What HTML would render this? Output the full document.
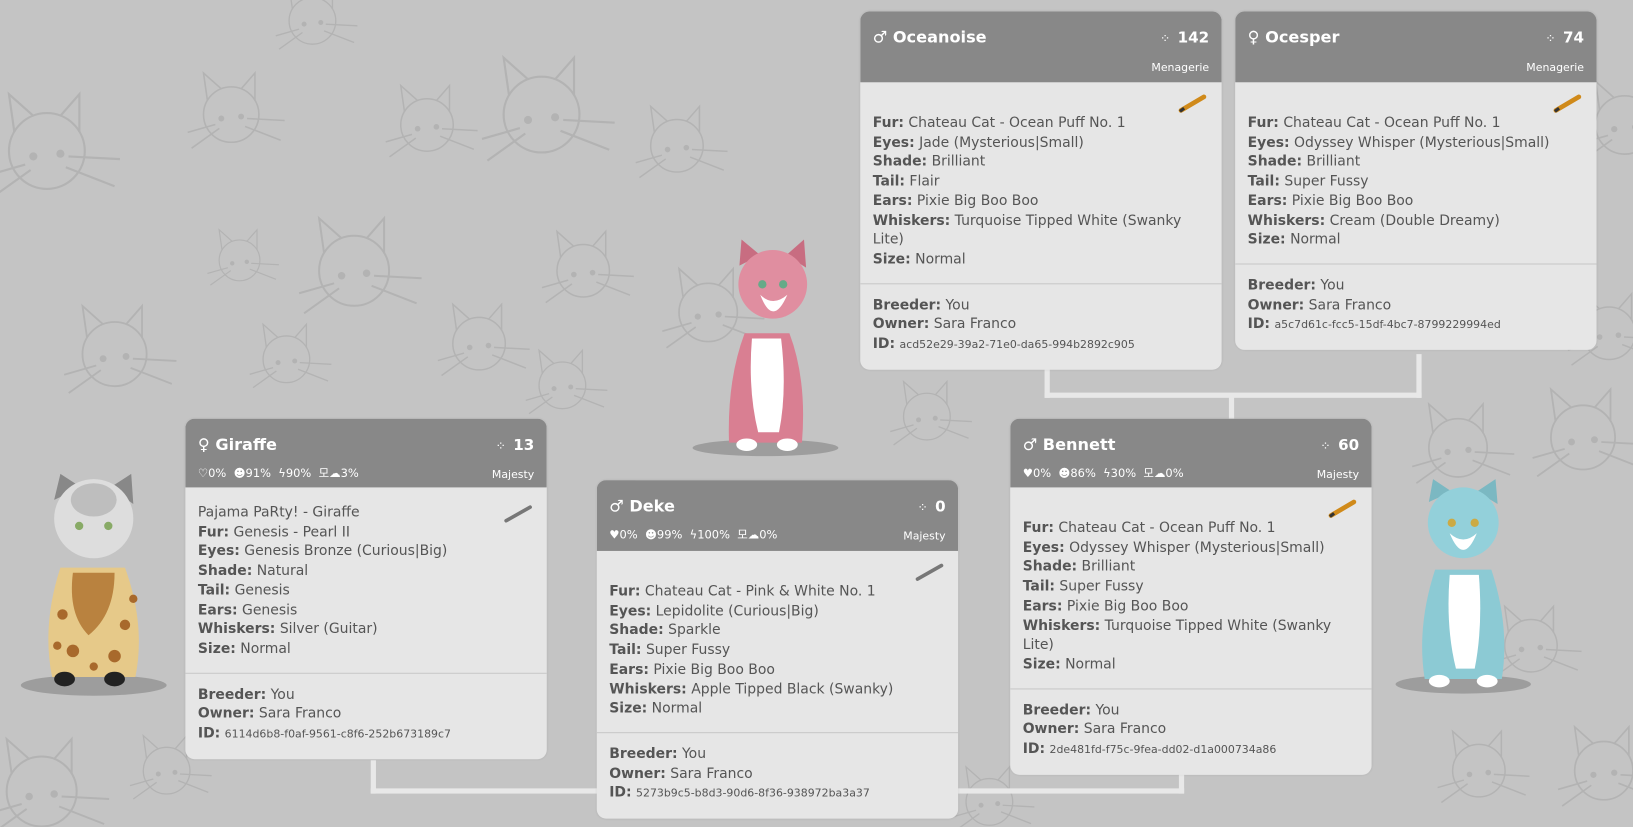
<!DOCTYPE html>
<html><head><meta charset="utf-8">
<style>
html,body{margin:0;padding:0;}
body{width:1633px;height:827px;overflow:hidden;background:#c4c4c4;font-family:"DejaVu Sans","Liberation Sans",sans-serif;}
#w{position:absolute;left:0;top:0;width:1568px;height:794px;transform:scale(1.04145);transform-origin:0 0;}
.bg{position:absolute;left:0;top:0;}
.ln{position:absolute;background:#e8e8e8;}
.card{position:absolute;width:347px;border-radius:9px;background:#e6e6e6;overflow:hidden;color:#555;font-size:13.4px;line-height:18.7px;box-shadow:0 0 2px rgba(0,0,0,.08);}
.hd{background:#888;color:#fff;position:relative;height:68px;}
.hd.s{height:66px;}
.nm{position:absolute;left:12px;top:16px;font-weight:bold;font-size:15.5px;}
.cnt{position:absolute;right:12px;top:17px;font-weight:bold;font-size:14.5px;}
.cnt i{font-style:normal;font-weight:normal;font-size:12px;margin-right:8px;letter-spacing:-1px;}
.sub{position:absolute;right:12px;top:45px;font-size:10.5px;}
.st{position:absolute;left:12px;top:44px;font-size:11px;}
.sec{padding:0 12px;}
.s1{padding-top:10px;padding-bottom:12px;border-bottom:1px solid #c8c8c8;}
.s2{padding-top:12px;padding-bottom:14px;}
.pen{height:21px;position:relative;}
.pen svg,.pf svg{position:absolute;right:0;top:0;}
.pf{float:right;width:30px;height:18px;position:relative;}
b{color:#555;}
.id{font-size:10.5px;}
.cat{position:absolute;}
</style></head><body>
<div id="w">
<svg class="bg" width="1568" height="794">
<defs><g id="cf" fill="none" stroke="#b3b3b3" stroke-width="1.6"><circle cx="0" cy="0" r="28"/><path d="M-24-14 L-28-42 L-10-26 M10-26 L24-42 L24-14"/><path d="M16 4 L54 6 M14 12 L50 26 M-16 10 L-44 18 M-12 14 L-40 34"/><circle cx="-10" cy="4" r="3" fill="#b3b3b3" stroke="none"/><circle cx="10" cy="2" r="3" fill="#b3b3b3" stroke="none"/></g></defs>
<use href="#cf" transform="translate(45,145) scale(1.3)"/><use href="#cf" transform="translate(222,110) scale(0.95)"/><use href="#cf" transform="translate(230,250) scale(0.7)"/><use href="#cf" transform="translate(340,260) scale(1.2)"/><use href="#cf" transform="translate(110,340) scale(1.1)"/><use href="#cf" transform="translate(275,345) scale(0.8)"/><use href="#cf" transform="translate(410,120) scale(0.9)"/><use href="#cf" transform="translate(520,110) scale(1.3)"/><use href="#cf" transform="translate(560,260) scale(0.9)"/><use href="#cf" transform="translate(460,330) scale(0.9)"/><use href="#cf" transform="translate(650,140) scale(0.9)"/><use href="#cf" transform="translate(680,300) scale(1)"/><use href="#cf" transform="translate(40,760) scale(1.2)"/><use href="#cf" transform="translate(160,740) scale(0.8)"/><use href="#cf" transform="translate(540,370) scale(0.8)"/><use href="#cf" transform="translate(890,400) scale(0.8)"/><use href="#cf" transform="translate(1400,430) scale(1)"/><use href="#cf" transform="translate(1520,420) scale(1.1)"/><use href="#cf" transform="translate(1470,620) scale(0.9)"/><use href="#cf" transform="translate(1540,740) scale(1)"/><use href="#cf" transform="translate(1420,740) scale(0.9)"/><use href="#cf" transform="translate(1560,120) scale(1)"/><use href="#cf" transform="translate(1545,320) scale(0.9)"/><use href="#cf" transform="translate(950,770) scale(0.8)"/><use href="#cf" transform="translate(470,520) scale(1)"/><use href="#cf" transform="translate(300,20) scale(0.8)"/>
</svg>

<div class="ln" style="left:1003px;top:353px;width:5px;height:29px"></div>
<div class="ln" style="left:1003px;top:377px;width:362px;height:5px"></div>
<div class="ln" style="left:1360px;top:340px;width:5px;height:42px"></div>
<div class="ln" style="left:1180px;top:380px;width:5px;height:22px"></div>
<div class="ln" style="left:356px;top:730px;width:5px;height:32px"></div>
<div class="ln" style="left:356px;top:757px;width:781px;height:5px"></div>
<div class="ln" style="left:1132px;top:743px;width:5px;height:19px"></div>

<!-- cats -->
<svg class="cat" style="left:660px;top:225px" width="160" height="220">
<ellipse cx="75" cy="205" rx="70" ry="8" fill="#555" opacity=".35"/>
<path d="M55 95 Q38 140 40 200 L110 200 Q115 140 98 95 Z" fill="#d97f92"/>
<path d="M62 100 Q58 150 68 190 L88 190 Q96 150 90 100 Z" fill="#fff"/>
<ellipse cx="57" cy="202" rx="10" ry="6" fill="#fff"/><ellipse cx="96" cy="202" rx="10" ry="6" fill="#fff"/>
<path d="M50 30 L52 5 L70 20 Z M95 20 L112 5 L114 32 Z" fill="#c86d81"/>
<ellipse cx="82" cy="48" rx="33" ry="33" fill="#e08ea0"/>
<path d="M70 58 Q82 90 96 58 Q82 70 70 58Z" fill="#fff"/>
<circle cx="72" cy="48" r="4" fill="#6a8"/><circle cx="92" cy="48" r="4" fill="#6a8"/>
</svg>
<svg class="cat" style="left:10px;top:450px" width="160" height="225">
<ellipse cx="80" cy="208" rx="70" ry="10" fill="#555" opacity=".35"/>
<path d="M48 95 Q30 150 40 200 L120 200 Q130 150 110 95 Z" fill="#e6c989"/>
<path d="M60 100 Q55 140 75 160 Q100 140 100 100Z" fill="#b9823f"/>
<g fill="#a8692c"><circle cx="50" cy="140" r="5"/><circle cx="60" cy="175" r="6"/><circle cx="110" cy="150" r="5"/><circle cx="100" cy="180" r="6"/><circle cx="80" cy="190" r="4"/><circle cx="45" cy="170" r="4"/><circle cx="118" cy="125" r="4"/></g>
<ellipse cx="52" cy="202" rx="10" ry="7" fill="#222"/><ellipse cx="100" cy="202" rx="10" ry="7" fill="#222"/>
<path d="M42 30 L48 5 L68 18 Z M96 18 L116 5 L118 34 Z" fill="#888"/>
<ellipse cx="80" cy="48" rx="38" ry="38" fill="#ddd"/>
<ellipse cx="80" cy="30" rx="22" ry="16" fill="#aaa" opacity=".6"/>
<circle cx="66" cy="55" r="4" fill="#8a6"/><circle cx="94" cy="55" r="4" fill="#8a6"/>
</svg>
<svg class="cat" style="left:1330px;top:452px" width="150" height="220">
<ellipse cx="75" cy="205" rx="65" ry="9" fill="#555" opacity=".35"/>
<path d="M48 95 Q30 150 38 200 L112 200 Q120 150 102 95 Z" fill="#8ccad4"/>
<path d="M62 100 Q58 150 68 190 L86 190 Q94 150 90 100 Z" fill="#fff"/>
<ellipse cx="52" cy="202" rx="10" ry="6" fill="#fff"/><ellipse cx="98" cy="202" rx="10" ry="6" fill="#fff"/>
<path d="M42 30 L46 8 L64 20 Z M88 20 L106 8 L108 32 Z" fill="#7bb8c2"/>
<ellipse cx="75" cy="50" rx="34" ry="34" fill="#93d0da"/>
<path d="M62 60 Q75 92 88 60 Q75 72 62 60Z" fill="#fff"/>
<circle cx="64" cy="50" r="4" fill="#ca4"/><circle cx="86" cy="50" r="4" fill="#ca4"/>
</svg>

<!-- Oceanoise -->
<div class="card" style="left:826px;top:11px">
<div class="hd"><div class="nm">♂ Oceanoise</div><div class="cnt"><i>⁘</i>142</div><div class="sub">Menagerie</div></div>
<div class="sec s1"><div class="pen"><svg width="30" height="20"><path d="M3 17 L25 4" stroke="#d08a1a" stroke-width="4.5" stroke-linecap="round"/><path d="M2 18 L6 15" stroke="#333" stroke-width="3"/></svg></div>
<b>Fur:</b> Chateau Cat - Ocean Puff No. 1<br><b>Eyes:</b> Jade (Mysterious|Small)<br><b>Shade:</b> Brilliant<br><b>Tail:</b> Flair<br><b>Ears:</b> Pixie Big Boo Boo<br><b>Whiskers:</b> Turquoise Tipped White (Swanky Lite)<br><b>Size:</b> Normal</div>
<div class="sec s2"><b>Breeder:</b> You<br><b>Owner:</b> Sara Franco<br><b>ID:</b> <span class="id">acd52e29-39a2-71e0-da65-994b2892c905</span></div>
</div>

<!-- Ocesper -->
<div class="card" style="left:1186px;top:11px">
<div class="hd"><div class="nm">♀ Ocesper</div><div class="cnt"><i>⁘</i>74</div><div class="sub">Menagerie</div></div>
<div class="sec s1"><div class="pen"><svg width="30" height="20"><path d="M3 17 L25 4" stroke="#d08a1a" stroke-width="4.5" stroke-linecap="round"/><path d="M2 18 L6 15" stroke="#333" stroke-width="3"/></svg></div>
<b>Fur:</b> Chateau Cat - Ocean Puff No. 1<br><b>Eyes:</b> Odyssey Whisper (Mysterious|Small)<br><b>Shade:</b> Brilliant<br><b>Tail:</b> Super Fussy<br><b>Ears:</b> Pixie Big Boo Boo<br><b>Whiskers:</b> Cream (Double Dreamy)<br><b>Size:</b> Normal</div>
<div class="sec s2"><b>Breeder:</b> You<br><b>Owner:</b> Sara Franco<br><b>ID:</b> <span class="id">a5c7d61c-fcc5-15df-4bc7-8799229994ed</span></div>
</div>

<!-- Giraffe -->
<div class="card" style="left:178px;top:402px">
<div class="hd s"><div class="nm">♀ Giraffe</div><div class="cnt"><i>⁘</i>13</div><div class="st">♡0% &nbsp;☻91% &nbsp;ϟ90% &nbsp;모☁3%</div><div class="sub">Majesty</div></div>
<div class="sec s1" style="padding-top:16px"><div class="pf"><svg width="30" height="18"><path d="M3 16 L26 3" stroke="#777" stroke-width="3.5" stroke-linecap="round"/></svg></div>
Pajama PaRty! - Giraffe<br><b>Fur:</b> Genesis - Pearl II<br><b>Eyes:</b> Genesis Bronze (Curious|Big)<br><b>Shade:</b> Natural<br><b>Tail:</b> Genesis<br><b>Ears:</b> Genesis<br><b>Whiskers:</b> Silver (Guitar)<br><b>Size:</b> Normal</div>
<div class="sec s2"><b>Breeder:</b> You<br><b>Owner:</b> Sara Franco<br><b>ID:</b> <span class="id">6114d6b8-f0af-9561-c8f6-252b673189c7</span></div>
</div>

<!-- Deke -->
<div class="card" style="left:573px;top:461px">
<div class="hd"><div class="nm">♂ Deke</div><div class="cnt"><i>⁘</i>0</div><div class="st">♥0% &nbsp;☻99% &nbsp;ϟ100% &nbsp;모☁0%</div><div class="sub">Majesty</div></div>
<div class="sec s1"><div class="pen"><svg width="30" height="20"><path d="M3 17 L26 4" stroke="#777" stroke-width="3.5" stroke-linecap="round"/></svg></div>
<b>Fur:</b> Chateau Cat - Pink &amp; White No. 1<br><b>Eyes:</b> Lepidolite (Curious|Big)<br><b>Shade:</b> Sparkle<br><b>Tail:</b> Super Fussy<br><b>Ears:</b> Pixie Big Boo Boo<br><b>Whiskers:</b> Apple Tipped Black (Swanky)<br><b>Size:</b> Normal</div>
<div class="sec s2"><b>Breeder:</b> You<br><b>Owner:</b> Sara Franco<br><b>ID:</b> <span class="id">5273b9c5-b8d3-90d6-8f36-938972ba3a37</span></div>
</div>

<!-- Bennett -->
<div class="card" style="left:970px;top:402px">
<div class="hd s"><div class="nm">♂ Bennett</div><div class="cnt"><i>⁘</i>60</div><div class="st">♥0% &nbsp;☻86% &nbsp;ϟ30% &nbsp;모☁0%</div><div class="sub">Majesty</div></div>
<div class="sec s1"><div class="pen"><svg width="30" height="20"><path d="M3 17 L25 4" stroke="#d08a1a" stroke-width="4.5" stroke-linecap="round"/><path d="M2 18 L6 15" stroke="#333" stroke-width="3"/></svg></div>
<b>Fur:</b> Chateau Cat - Ocean Puff No. 1<br><b>Eyes:</b> Odyssey Whisper (Mysterious|Small)<br><b>Shade:</b> Brilliant<br><b>Tail:</b> Super Fussy<br><b>Ears:</b> Pixie Big Boo Boo<br><b>Whiskers:</b> Turquoise Tipped White (Swanky Lite)<br><b>Size:</b> Normal</div>
<div class="sec s2"><b>Breeder:</b> You<br><b>Owner:</b> Sara Franco<br><b>ID:</b> <span class="id">2de481fd-f75c-9fea-dd02-d1a000734a86</span></div>
</div>
</div>
</body></html>
